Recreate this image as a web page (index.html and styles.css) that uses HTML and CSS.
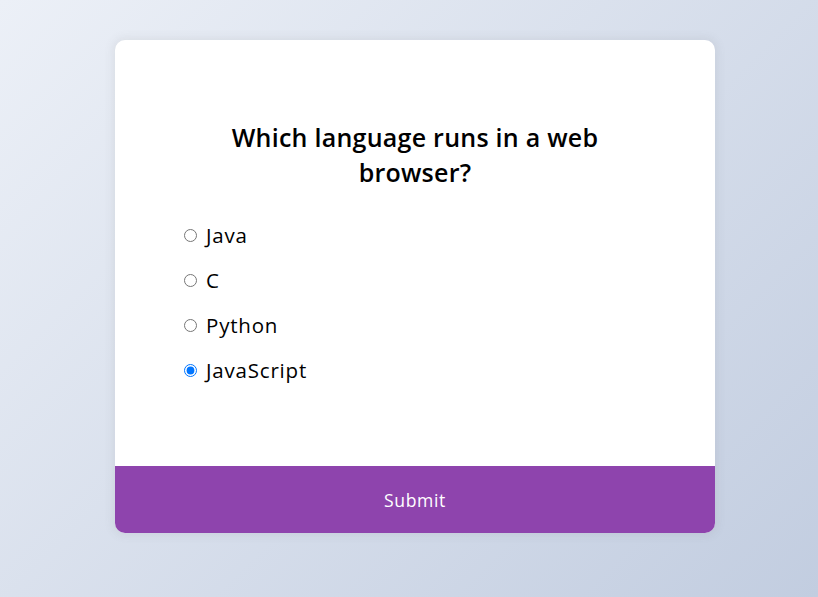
FILE: index.html
```html
<!DOCTYPE html>
<html lang="en">
<head>
<meta charset="UTF-8">
<title>Quiz</title>
<link rel="stylesheet" href="styles.css">
</head>
<body>
  <div class="quiz-container">
    <div class="quiz-header">
      <h2 class="question">Which language runs in a web browser?</h2>
      <ul class="answers">
        <li><input type="radio" name="answer" id="a" class="answer"><label for="a">Java</label></li>
        <li><input type="radio" name="answer" id="b" class="answer"><label for="b">C</label></li>
        <li><input type="radio" name="answer" id="c" class="answer"><label for="c">Python</label></li>
        <li><input type="radio" name="answer" id="d" class="answer" checked><label for="d">JavaScript</label></li>
      </ul>
    </div>
    <button class="submit">Submit</button>
  </div>
</body>
</html>
```
FILE: styles.css
```css
* {
  box-sizing: border-box;
}

body {
  margin: 0;
  min-height: 100vh;
  padding: 40px 0 0 12px;
  display: flex;
  justify-content: center;
  align-items: flex-start;
  background-color: #b8c6db;
  background-image: linear-gradient(315deg, #c2cde0 0%, #ecf0f7 100%);
  font-family: "Open Sans", "Noto Sans", sans-serif;
  line-height: 1.5;
  overflow: hidden;
}

.quiz-container {
  background-color: #fff;
  border-radius: 10px;
  box-shadow: 0 0 10px 2px rgba(100, 100, 100, 0.1);
  width: 600px;
  overflow: hidden;
}

.quiz-header {
  padding: 64px 64px 65px;
}

.question {
  padding: 16px 40px 15px;
  margin: 0;
  text-align: center;
  font-size: 25px;
  font-weight: 600;
  letter-spacing: 0.25px;
  line-height: 35px;
  color: #000;
}

.answers {
  list-style: none;
  padding: 0;
  margin: 16px 0;
}

.answers li {
  font-size: 20.5px;
  letter-spacing: 0.8px;
  line-height: 29px;
  margin: 16px 0;
  display: flex;
  align-items: center;
}

.answer {
  margin: 0 9px 0 5px;
  width: 13px;
  height: 13px;
}

.answers label {
  cursor: pointer;
  color: #000;
}

.submit {
  display: block;
  width: 100%;
  border: none;
  background-color: #8e44ad;
  color: #fff;
  font-family: inherit;
  font-size: 17.6px;
  letter-spacing: 0.6px;
  line-height: 26px;
  padding: 20.5px;
  cursor: pointer;
}
```
